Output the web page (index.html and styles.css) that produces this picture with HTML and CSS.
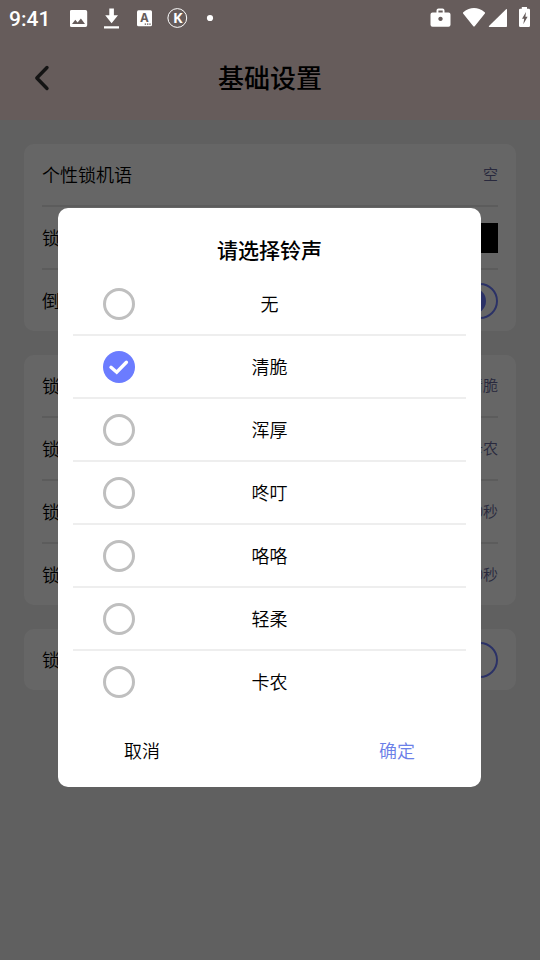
FILE: index.html
```html
<!DOCTYPE html>
<html lang="zh-CN">
<head>
<meta charset="utf-8">
<title>基础设置</title>
<link rel="stylesheet" href="styles.css">
</head>
<body>
<div class="page">
  <header class="header">
    <svg class="back" width="16" height="26" viewBox="0 0 16 26"><path d="M13 2.5 2.8 13 13 23.5" fill="none" stroke="#333" stroke-width="3.4" stroke-linecap="round" stroke-linejoin="round"/></svg>
    <h1>基础设置</h1>
  </header>
  <main class="content">
    <section class="card">
      <div class="row"><span class="label">个性锁机语</span><span class="value">空</span></div>
      <div class="row"><span class="label">锁</span><span class="swatch"></span></div>
      <div class="row"><span class="label">倒</span><span class="toggle on"></span></div>
    </section>
    <section class="card">
      <div class="row"><span class="label">锁</span><span class="value">清脆</span></div>
      <div class="row"><span class="label">锁</span><span class="value">卡农</span></div>
      <div class="row"><span class="label">锁</span><span class="value">30秒</span></div>
      <div class="row"><span class="label">锁</span><span class="value">30秒</span></div>
    </section>
    <section class="card">
      <div class="row"><span class="label">锁</span><span class="toggle"></span></div>
    </section>
  </main>
</div>
<div class="overlay">
  <div class="dialog">
    <h2>请选择铃声</h2>
    <div class="options">
      <div class="option"><span class="radio"></span><span class="label">无</span></div>
      <div class="option"><span class="radio checked"><svg width="32" height="32" viewBox="0 0 32 32"><path d="M8 16.3 13.7 21.2 23.4 11.2" fill="none" stroke="#fff" stroke-width="3.4" stroke-linecap="round" stroke-linejoin="miter"/></svg></span><span class="label">清脆</span></div>
      <div class="option"><span class="radio"></span><span class="label">浑厚</span></div>
      <div class="option"><span class="radio"></span><span class="label">咚叮</span></div>
      <div class="option"><span class="radio"></span><span class="label">咯咯</span></div>
      <div class="option"><span class="radio"></span><span class="label">轻柔</span></div>
      <div class="option"><span class="radio"></span><span class="label">卡农</span></div>
    </div>
    <div class="actions"><span class="cancel">取消</span><span class="confirm">确定</span></div>
  </div>
</div>
<div class="statusbar">
  <span class="time">9:41</span>
  <svg class="status-icons" width="470" height="36" viewBox="70 0 470 36" fill="#fff">
    <path fill-rule="evenodd" d="M71.5 10h14q1.700 0 1.700 1.700v13.600q0 1.700-1.700 1.700h-14q-1.700 0-1.700-1.700v-13.600q0-1.700 1.700-1.700zM72 24h13l-4.100-5.600-3.300 4-2.300-2.600z"/>
    <path d="M109.300 8.500h4.600v6.700h4.100l-6.400 8-6.400-8h4.100zM104 26.200h15v2.300h-15z"/>
    <rect x="137" y="10.200" width="15" height="16" rx="1.500"/>
    <text x="144.300" y="22.300" text-anchor="middle" font-size="12" font-weight="700" fill="#665c5b">A</text>
    <path d="M144.700 23.400h1.400v1.400h-1.400zM147 23.400h1.400v1.400H147zM149.300 23.400h1.400v1.400h-1.400z" fill="#665c5b"/>
    <circle cx="177.300" cy="18" r="9.400" fill="none" stroke="#fff" stroke-width="1"/>
    <text x="177.900" y="23" text-anchor="middle" font-size="14.500" font-weight="700">K</text>
    <circle cx="210" cy="18" r="3.100"/>
    <path fill-rule="evenodd" d="M432.500 12.500h4v-2q0-2 2-2h4q2 0 2 2v2h4q2 0 2 2v10.300q0 2-2 2h-16q-2 0-2-2v-10.300q0-2 2-2zM438.400 12.500h4.300v-2h-4.300zM440.500 16.700a2.200 2.200 0 1 0 .01 0z"/>
    <path d="M463.300 12.200Q474 4 484.700 12.200q.7.500.2 1.200L474.900 26q-.9 1-1.800 0L463.100 13.400q-.4-.7.200-1.200z"/>
    <path d="M489.500 27h16.700q.8 0 .8-.8V9.600q0-1.200-.9-.4L489 26q-.7.800.5 1z"/>
    <path fill-rule="evenodd" d="M521.800 7h5.200v1.800h1.700q1.300 0 1.300 1.300v15.600q0 1.300-1.300 1.300h-8.400q-1.300 0-1.300-1.300V10.100q0-1.300 1.300-1.300h1.500zM526 12l-4 6.800h2.200l-.9 5.500 4.300-7.500h-2.200z"/>
  </svg>
</div>
</body>
</html>
```
FILE: styles.css
```css
* { box-sizing: border-box; }

body {
  margin: 0;
  width: 540px;
  height: 960px;
  overflow: hidden;
  position: relative;
  font-family: Roboto, "Noto Sans CJK SC", sans-serif;
  font-size: 18px;
  font-weight: 350;
  line-height: 26px;
  color: #000;
}

h1, h2 { margin: 0; font-weight: 500; }

.page { height: 960px; background: #f0f0f0; }

.header {
  height: 120px;
  padding: 36px 34px 0;
  display: grid;
  grid-template-columns: 16px 1fr 16px;
  align-items: center;
  background: #ffe6e4;
}
.header h1 {
  padding-top: 2px;
  text-align: center;
  font-size: 26px;
  line-height: 36px;
}
.back { display: block; }

.content {
  padding: 24px;
  display: flex;
  flex-direction: column;
  gap: 24px;
}

.card { padding: 0 18px; border-radius: 10px; background: #fff; }

.row {
  height: 61px;
  display: flex;
  align-items: center;
  justify-content: space-between;
}
.row + .row { height: 63px; border-top: 2px solid #e6e6e6; }
.label { padding-top: 2px; }
.value { font-size: 15px; color: #66669a; }
.swatch { width: 60px; height: 30px; background: #000; }

.toggle {
  width: 72px;
  height: 36px;
  padding: 4px 10px;
  display: flex;
  align-items: center;
  border: 2px solid #6b7cff;
  border-radius: 18px;
}
.toggle.on::after {
  content: "";
  width: 26px;
  height: 26px;
  margin-left: auto;
  border-radius: 50%;
  background: #6b7cff;
}

.overlay {
  position: absolute;
  inset: 0;
  padding: 208px 59px 0 58px;
  background: rgba(0, 0, 0, 0.6);
}

.dialog {
  height: 579px;
  padding: 25px 15px 0;
  border-radius: 10px;
  background: #fff;
}
.dialog h2 {
  height: 40px;
  font-size: 21px;
  line-height: 36px;
  text-align: center;
}

.option {
  height: 63px;
  padding: 0 30px;
  display: grid;
  grid-template-columns: 32px 1fr 32px;
  align-items: center;
  text-align: center;
  border-bottom: 2px solid #eee;
}
.option:last-child { border-bottom-color: transparent; }

.radio {
  width: 32px;
  height: 32px;
  border: 3px solid #bfbfbf;
  border-radius: 50%;
}
.radio.checked { border: 0; background: #6b7cff; }
.radio svg { display: block; }

.actions {
  padding: 25px 51px 0;
  display: flex;
  justify-content: space-between;
}
.confirm { color: #6b80e8; }

.statusbar {
  position: absolute;
  inset: 0 0 auto 0;
  height: 36px;
  padding-left: 9px;
  display: flex;
  align-items: center;
  color: #fff;
}
.time { width: 61px; padding-top: 1px; font-size: 21px; font-weight: 500; }
.status-icons { display: block; font-family: "Noto Sans", sans-serif; }
```
